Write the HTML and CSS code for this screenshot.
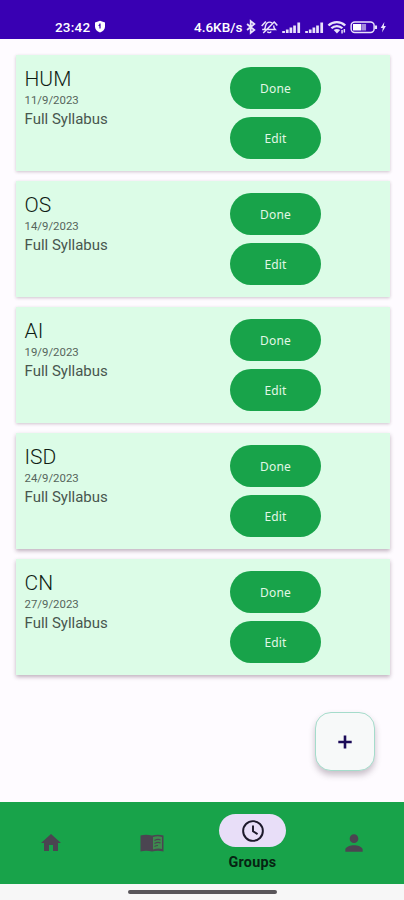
FILE: index.html
```html
<!DOCTYPE html>
<html lang="en">
<head>
<meta charset="utf-8">
<meta name="viewport" content="width=device-width, initial-scale=1">
<title>Groups</title>
<link rel="stylesheet" href="styles.css">
</head>
<body>
<div class="screen">
  <header class="status">
    <div class="status-left">
      <span class="clock">23:42</span>
      <svg class="shield" width="12" height="13" viewBox="0 0 12 13"><path d="M6 .8 11 2.6V6.500C11 9.500 9 11.400 6 12.400 3 11.400 1 9.500 1 6.500V2.600z" fill="#fff"/><path d="M6 3.500v5M6 4.500l-1.300 1.300" stroke="#3b00b3" stroke-width="1.200" fill="none"/></svg>
    </div>
    <div class="status-right">
      <span class="speed">4.6KB/s</span>
      <svg width="142" height="16" viewBox="0 0 136 16" preserveAspectRatio="none" fill="none" stroke="#e9e2fb" stroke-width="1.400">
        <path stroke-width="1.700" d="M1 5l7 6-3.500 3V2L8 5l-7 6"/>
        <path d="M15.500 10.500h9.500M17.500 10.500c1-1.500 1-2.500 1.300-4C19.500 3.300 22.500 2.300 25 4M26.500 6.500c0 2 .5 3 1.500 4h-4M15 7l4-4.500M27.500 3.500l2.500 3M16.500 14 27.500 2.500M20.500 12.500c.5 1.500 3 1.500 3.500 0"/>
        <path stroke-width="2.600" d="M36 14v-2M39.500 14v-3.500M43 14V8.500M46.500 14V6.500M50.500 14V3.500"/>
        <path stroke-width="2.600" d="M58 14v-2M61.500 14v-3.500M65 14V8.500M68.500 14V6.500M72.500 14V3.500"/>
        <path stroke-width="2.300" d="M79 6.500c4.500-4.500 11.500-4.500 16 0M81.800 9.300c3-3 7.500-3 10.500 0"/><path d="M84 11c2-1.500 4.200-1.500 6.200 0l-3.100 3.500z" fill="#e9e2fb" stroke="none"/><path d="M92 11v3.500M94.200 13.500V10"/>
        <rect x="100.700" y="3" width="22" height="10.500" rx="3.500"/><path d="M102.500 5h8v6.500h-8z" fill="#fff" stroke="none"/><path d="M111 5h4v6.500h-4z" fill="#a58bdd" stroke="none"/><path stroke-width="2" d="M124.500 6.500v3.500"/>
        <path d="M132.500 3l-3.500 6h2l-.7 4.500 3.700-6.500h-2z" fill="#e9e2fb" stroke="none"/>
      </svg>
    </div>
  </header>

  <main class="list">
    <article class="card"><div class="info"><h2>HUM</h2><time>11/9/2023</time><p>Full Syllabus</p></div><div class="actions"><button>Done</button><button>Edit</button></div></article>
    <article class="card"><div class="info"><h2>OS</h2><time>14/9/2023</time><p>Full Syllabus</p></div><div class="actions"><button>Done</button><button>Edit</button></div></article>
    <article class="card"><div class="info"><h2>AI</h2><time>19/9/2023</time><p>Full Syllabus</p></div><div class="actions"><button>Done</button><button>Edit</button></div></article>
    <article class="card raised"><div class="info"><h2>ISD</h2><time>24/9/2023</time><p>Full Syllabus</p></div><div class="actions"><button>Done</button><button>Edit</button></div></article>
    <article class="card raised"><div class="info"><h2>CN</h2><time>27/9/2023</time><p>Full Syllabus</p></div><div class="actions"><button>Done</button><button>Edit</button></div></article>
  </main>

  <button class="fab" aria-label="Add"><svg width="16" height="16" viewBox="0 0 16 16"><path d="M8 1.500v13M1.300 8h13.400" stroke="#1b0b58" stroke-width="2.600"/></svg></button>

  <nav class="tabs">
    <a class="tab"><svg width="24" height="24" viewBox="0 0 24 24"><path d="M10 20v-6h4v6h5v-8h3L12 3 2 12h3v8z"/></svg></a>
    <a class="tab"><svg width="24" height="22" viewBox="0 0 24 22"><path d="M.5 3.500Q6 1.800 12 3.500 18 1.800 23.500 3.500V19.500Q18 18 12 19.500 6 18 .5 19.500z"/><path d="M13 5Q18 3.500 22 5V17Q18 16 13 17.500z" fill="#3d8a4e"/><path d="M14.500 8.500Q18 6.500 20.500 8M14.500 11.500Q18 9.500 20.500 11M14.500 14.500Q16 13.500 18 13.500" fill="none" stroke="#4b4551" stroke-width="1.200"/></svg></a>
    <a class="tab active"><span class="pill"><svg width="26" height="26" viewBox="0 0 24 24"><path d="M12 2.900a9.100 9.100 0 1 0 0 18.200a9.100 9.100 0 1 0 0-18.200zM12 7v5.300l4.200 2.600" fill="none" stroke="#1d192b" stroke-width="1.800"/></svg></span><span class="label">Groups</span></a>
    <a class="tab"><svg width="26" height="26" viewBox="0 0 24 24"><path d="M12 12a4 4 0 1 0 0-8 4 4 0 0 0 0 8zm0 2c-2.700 0-8 1.300-8 4v2h16v-2c0-2.700-5.300-4-8-4z"/></svg></a>
  </nav>
  <footer class="gesture"><span></span></footer>
</div>
</body>
</html>
```

FILE: styles.css
```css
* { box-sizing: border-box; }

body {
  margin: 0;
  background: #fefbff;
  font-family: Roboto, sans-serif;
}

.screen {
  position: relative;
  display: flex;
  flex-direction: column;
  width: 404px;
  height: 900px;
  overflow: hidden;
}

.status {
  flex: none;
  display: flex;
  justify-content: space-between;
  height: 39px;
  padding: 19px 16px 0 55px;
  background: #3900b3;
  color: #fff;
  font-size: 13.5px;
  font-weight: 500;
  line-height: 16px;
}

.status-left, .status-right { display: flex; height: 16px; }
.clock { width: 36px; letter-spacing: 0.2px; }
.shield { margin: 1px 0 0 3px; }
.speed { width: 52px; letter-spacing: 0; white-space: nowrap; }
.status-right svg { flex: none; }

.list {
  flex: 1;
  display: flex;
  flex-direction: column;
  gap: 10px;
  padding: 16px 14px 0 16px;
}

.card {
  flex: none;
  display: flex;
  height: 116px;
  background: #dcfce7;
  box-shadow: 0 1px 3px rgba(60, 20, 50, 0.24);
}

.raised { box-shadow: 0 2px 4px rgba(60, 20, 50, 0.32); }

.info {
  width: 214px;
  padding: 11px 0 0 8.500px;
}

h2 {
  margin: 0;
  color: #101c15;
  font-size: 21px;
  font-weight: 300;
  line-height: 26px;
}

time {
  display: block;
  color: #56655c;
  font-size: 11.4px;
  line-height: 16px;
}

p {
  margin: 0;
  color: #48564e;
  font-size: 15px;
  line-height: 23px;
}

.actions {
  display: flex;
  flex-direction: column;
  gap: 8px;
  padding-top: 12px;
}

.actions button {
  width: 91px;
  height: 42px;
  padding: 1px 0 0;
  border: 0;
  border-radius: 21px;
  background: #18a34a;
  color: #e2f7e6;
  font: 400 12px "Noto Sans", sans-serif;
  letter-spacing: 0.15px;
}

.fab {
  position: absolute;
  left: 315px;
  top: 712px;
  display: grid;
  place-items: center;
  width: 60px;
  height: 59px;
  padding: 0;
  border: 1px solid #a5dccb;
  border-radius: 16px;
  background: #f7f9f9;
  box-shadow: 0 4px 6px rgba(60, 40, 60, 0.28);
}

.tabs {
  flex: none;
  display: grid;
  grid-template-columns: repeat(4, 1fr);
  height: 82px;
  background: #18a34a;
}

.tab {
  display: flex;
  align-items: center;
  justify-content: center;
  fill: #4b4551;
}

.active {
  flex-direction: column;
  justify-content: flex-start;
  padding-top: 12px;
}

.pill {
  display: grid;
  place-items: center;
  width: 67px;
  height: 33px;
  border-radius: 17px;
  background: #e8def8;
}

.label {
  margin-top: 6px;
  color: #062412;
  font-size: 14.3px;
  font-weight: 700;
  line-height: 18px;
  letter-spacing: 0.3px;
}

.gesture {
  flex: none;
  height: 16px;
  padding-top: 6px;
  background: #f7f7f7;
}

.gesture span {
  display: block;
  width: 149px;
  height: 4px;
  margin: 0 auto;
  border-radius: 2px;
  background: #59565a;
}
```
